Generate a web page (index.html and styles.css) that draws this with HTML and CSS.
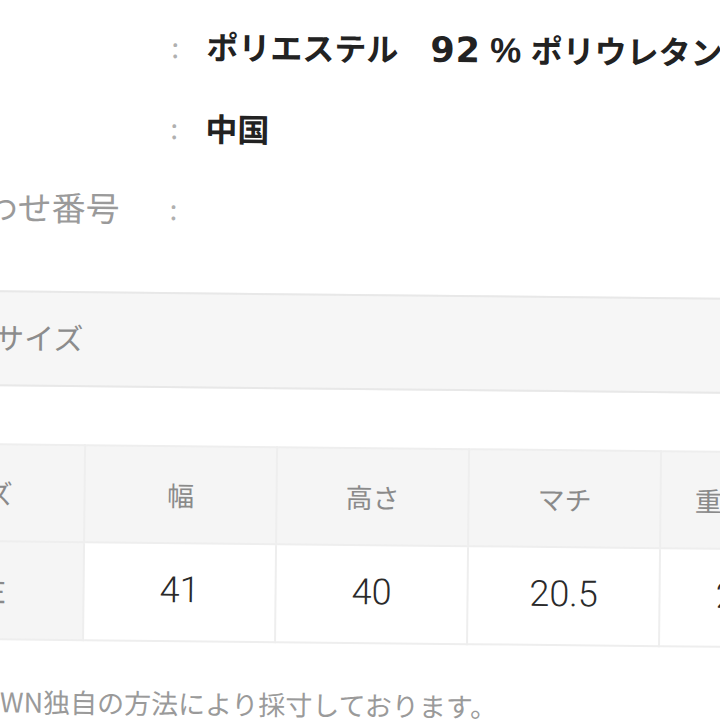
FILE: index.html
```html
<!DOCTYPE html>
<html lang="ja">
<head>
<meta charset="utf-8">
<title>商品情報</title>
<link rel="stylesheet" href="styles.css">
</head>
<body>
<div class="page">
  <dl class="specs">
    <div class="spec-row">
      <dt class="spec-label">素材</dt>
      <dd class="spec-colon">:</dd>
      <dd class="spec-value">ポリエステル　<span class="num">92</span> <span class="pct">%</span> ポリウレタン　<span class="num">8</span> <span class="pct">%</span></dd>
    </div>
    <div class="spec-row">
      <dt class="spec-label">原産国</dt>
      <dd class="spec-colon">:</dd>
      <dd class="spec-value">中国</dd>
    </div>
    <div class="spec-row">
      <dt class="spec-label">お問い合わせ番号</dt>
      <dd class="spec-colon">:</dd>
      <dd class="spec-value"></dd>
    </div>
  </dl>

  <div class="band">アイテムサイズ</div>

  <table class="size-table">
    <tr class="head-row">
      <th class="cell-size">サイズ</th>
      <th>幅</th>
      <th>高さ</th>
      <th>マチ</th>
      <th>重さ（g）</th>
    </tr>
    <tr class="value-row">
      <th class="cell-size">FREE</th>
      <td>41</td>
      <td>40</td>
      <td>20.5</td>
      <td>2800</td>
    </tr>
  </table>

  <p class="note">ZOZOTOWN独自の方法により採寸しております。</p>
</div>
</body>
</html>
```

FILE: styles.css
```css
html, body {
  margin: 0;
  padding: 0;
  background: #ffffff;
  overflow: hidden;
  width: 720px;
  height: 720px;
}

body {
  font-family: "Noto Sans CJK JP", "Noto Sans", sans-serif;
}

.page {
  width: 1100px;
  margin-left: -154px;
  padding-top: 7px;
  transform: rotate(0.6deg);
  transform-origin: 514px 360px;
}

.specs {
  margin: 0;
}

.spec-row {
  display: grid;
  grid-template-columns: 322px 35px 1fr;
  height: 81px;
  align-items: center;
}

.spec-row dd {
  margin: 0;
}

.spec-label {
  font-size: 34px;
  color: #9a9a9a;
  white-space: nowrap;
}

.spec-colon {
  font-size: 28px;
  color: #b0b0b0;
}

.spec-value {
  font-size: 32px;
  font-weight: 700;
  color: #222222;
  white-space: nowrap;
  line-height: 44px;
}

.spec-value .num {
  font-family: "DejaVu Sans", sans-serif;
  font-size: 35px;
  font-weight: 700;
  letter-spacing: 1px;
}

.spec-value .pct {
  font-family: "Liberation Sans", sans-serif;
  font-size: 35px;
  font-weight: 700;
  margin: 0 2px;
}

.band {
  margin-top: 44px;
  height: 96px;
  background: #f6f6f6;
  border-top: 2px solid #e8e8e8;
  border-bottom: 2px solid #e8e8e8;
  display: flex;
  align-items: center;
  padding-left: 31px;
  padding-bottom: 4px;
  box-sizing: border-box;
  font-size: 30px;
  color: #8c8c8c;
}

.size-table {
  margin-top: 57px;
  margin-left: 15px;
  border-collapse: collapse;
  table-layout: fixed;
}

.size-table th,
.size-table td {
  width: 190px;
  text-align: center;
  border: 2px solid #eeeeee;
  padding: 0;
}

.size-table .cell-size {
  width: 222px;
}

.head-row th {
  height: 95px;
  background: #f5f5f5;
  font-size: 27px;
  font-weight: 400;
  color: #8a8a8a;
}

.head-row th + th {
  border-left-color: #f9f9f9;
}

.value-row {
  height: 98px;
}

.value-row th {
  background: #f5f5f5;
  font-size: 29px;
  font-weight: 400;
  color: #8a8a8a;
}

.value-row td {
  background: #ffffff;
  font-family: Roboto, "Noto Sans CJK JP", sans-serif;
  font-weight: 300;
  font-size: 36px;
  color: #2a2a2a;
  padding-bottom: 4px;
}

.note {
  margin: 43px 0 0;
  padding-left: 52px;
  line-height: 36px;
  font-size: 27px;
  color: #9a9a9a;
  white-space: nowrap;
}
```
